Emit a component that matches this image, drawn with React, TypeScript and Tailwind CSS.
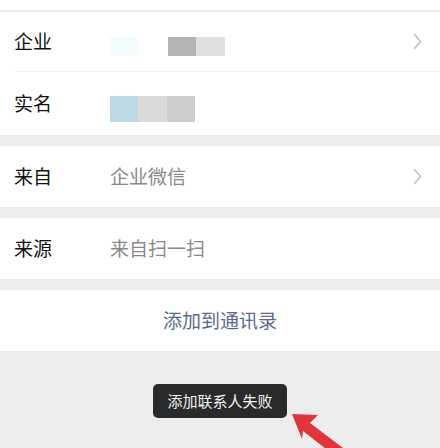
const font = { fontFamily: '"Noto Sans CJK SC", "Noto Sans", sans-serif' };

const Chevron = () => (
  <svg width="9" height="17" viewBox="0 0 9 17" fill="none" className="ml-auto mr-[18px]">
    <path d="M1.5 1.5 L7.5 8.5 L1.5 15.5" stroke="#c2c2c2" strokeWidth="1.6" strokeLinecap="round" strokeLinejoin="round" />
  </svg>
);

const Label = ({ children }: { children: string }) => (
  <span className="w-[96px] shrink-0 text-[19px] text-[#111]">{children}</span>
);

export default function App() {
  return (
    <div className="relative w-[440px] h-[448px] overflow-hidden bg-[#ededed] text-[19px]" style={font}>
      <div className="h-[10px] bg-white" />
      <div className="h-[2px]" />

      <section className="bg-white">
        <div className="flex items-center h-[59px] pl-[14px]">
          <Label>企业</Label>
          <div className="flex h-[19px] mt-[10px]">
            <div className="w-[27px] bg-[#f2fbfd]" />
            <div className="w-[31px] bg-white" />
            <div className="w-[28px] bg-[#b4b4b4]" />
            <div className="w-[29px] bg-[#e0e0e0]" />
          </div>
          <Chevron />
        </div>
        <div className="ml-[15px] h-px bg-[#f0f0f0]" />
        <div className="flex items-center h-[63px] pl-[14px]">
          <Label>实名</Label>
          <div className="flex h-[26px] mt-[10px]">
            <div className="w-[28px] bg-[#bed7e5]" />
            <div className="w-[29px] bg-[#dadada]" />
            <div className="w-[28px] bg-[#cdcdcd]" />
          </div>
        </div>
      </section>

      <div className="h-[11px]" />
      <section className="flex items-center h-[61px] pl-[14px] bg-white">
        <Label>来自</Label>
        <span className="text-[#8a8a8a]">企业微信</span>
        <Chevron />
      </section>

      <div className="h-[11px]" />
      <section className="flex items-center h-[61px] pl-[14px] bg-white">
        <Label>来源</Label>
        <span className="text-[#8a8a8a]">来自扫一扫</span>
      </section>

      <div className="h-[11px]" />
      <section className="flex items-center justify-center h-[61px] bg-white">
        <span className="text-[#5a6a8f]">添加到通讯录</span>
      </section>

      <div className="flex justify-center mt-[33px]">
        <div className="flex items-center justify-center w-[134px] h-[34px] rounded-[5px] bg-[#2a2a2a] text-[15px] text-[#f2f2f2]">
          添加联系人失败
        </div>
      </div>

      <svg className="absolute left-0 top-0" width="440" height="448" viewBox="0 0 440 448">
        <polygon points="292,414 318,415 310,423 347,451 340,460 303,431 302,439" fill="#e2353b" />
      </svg>
    </div>
  );
}
